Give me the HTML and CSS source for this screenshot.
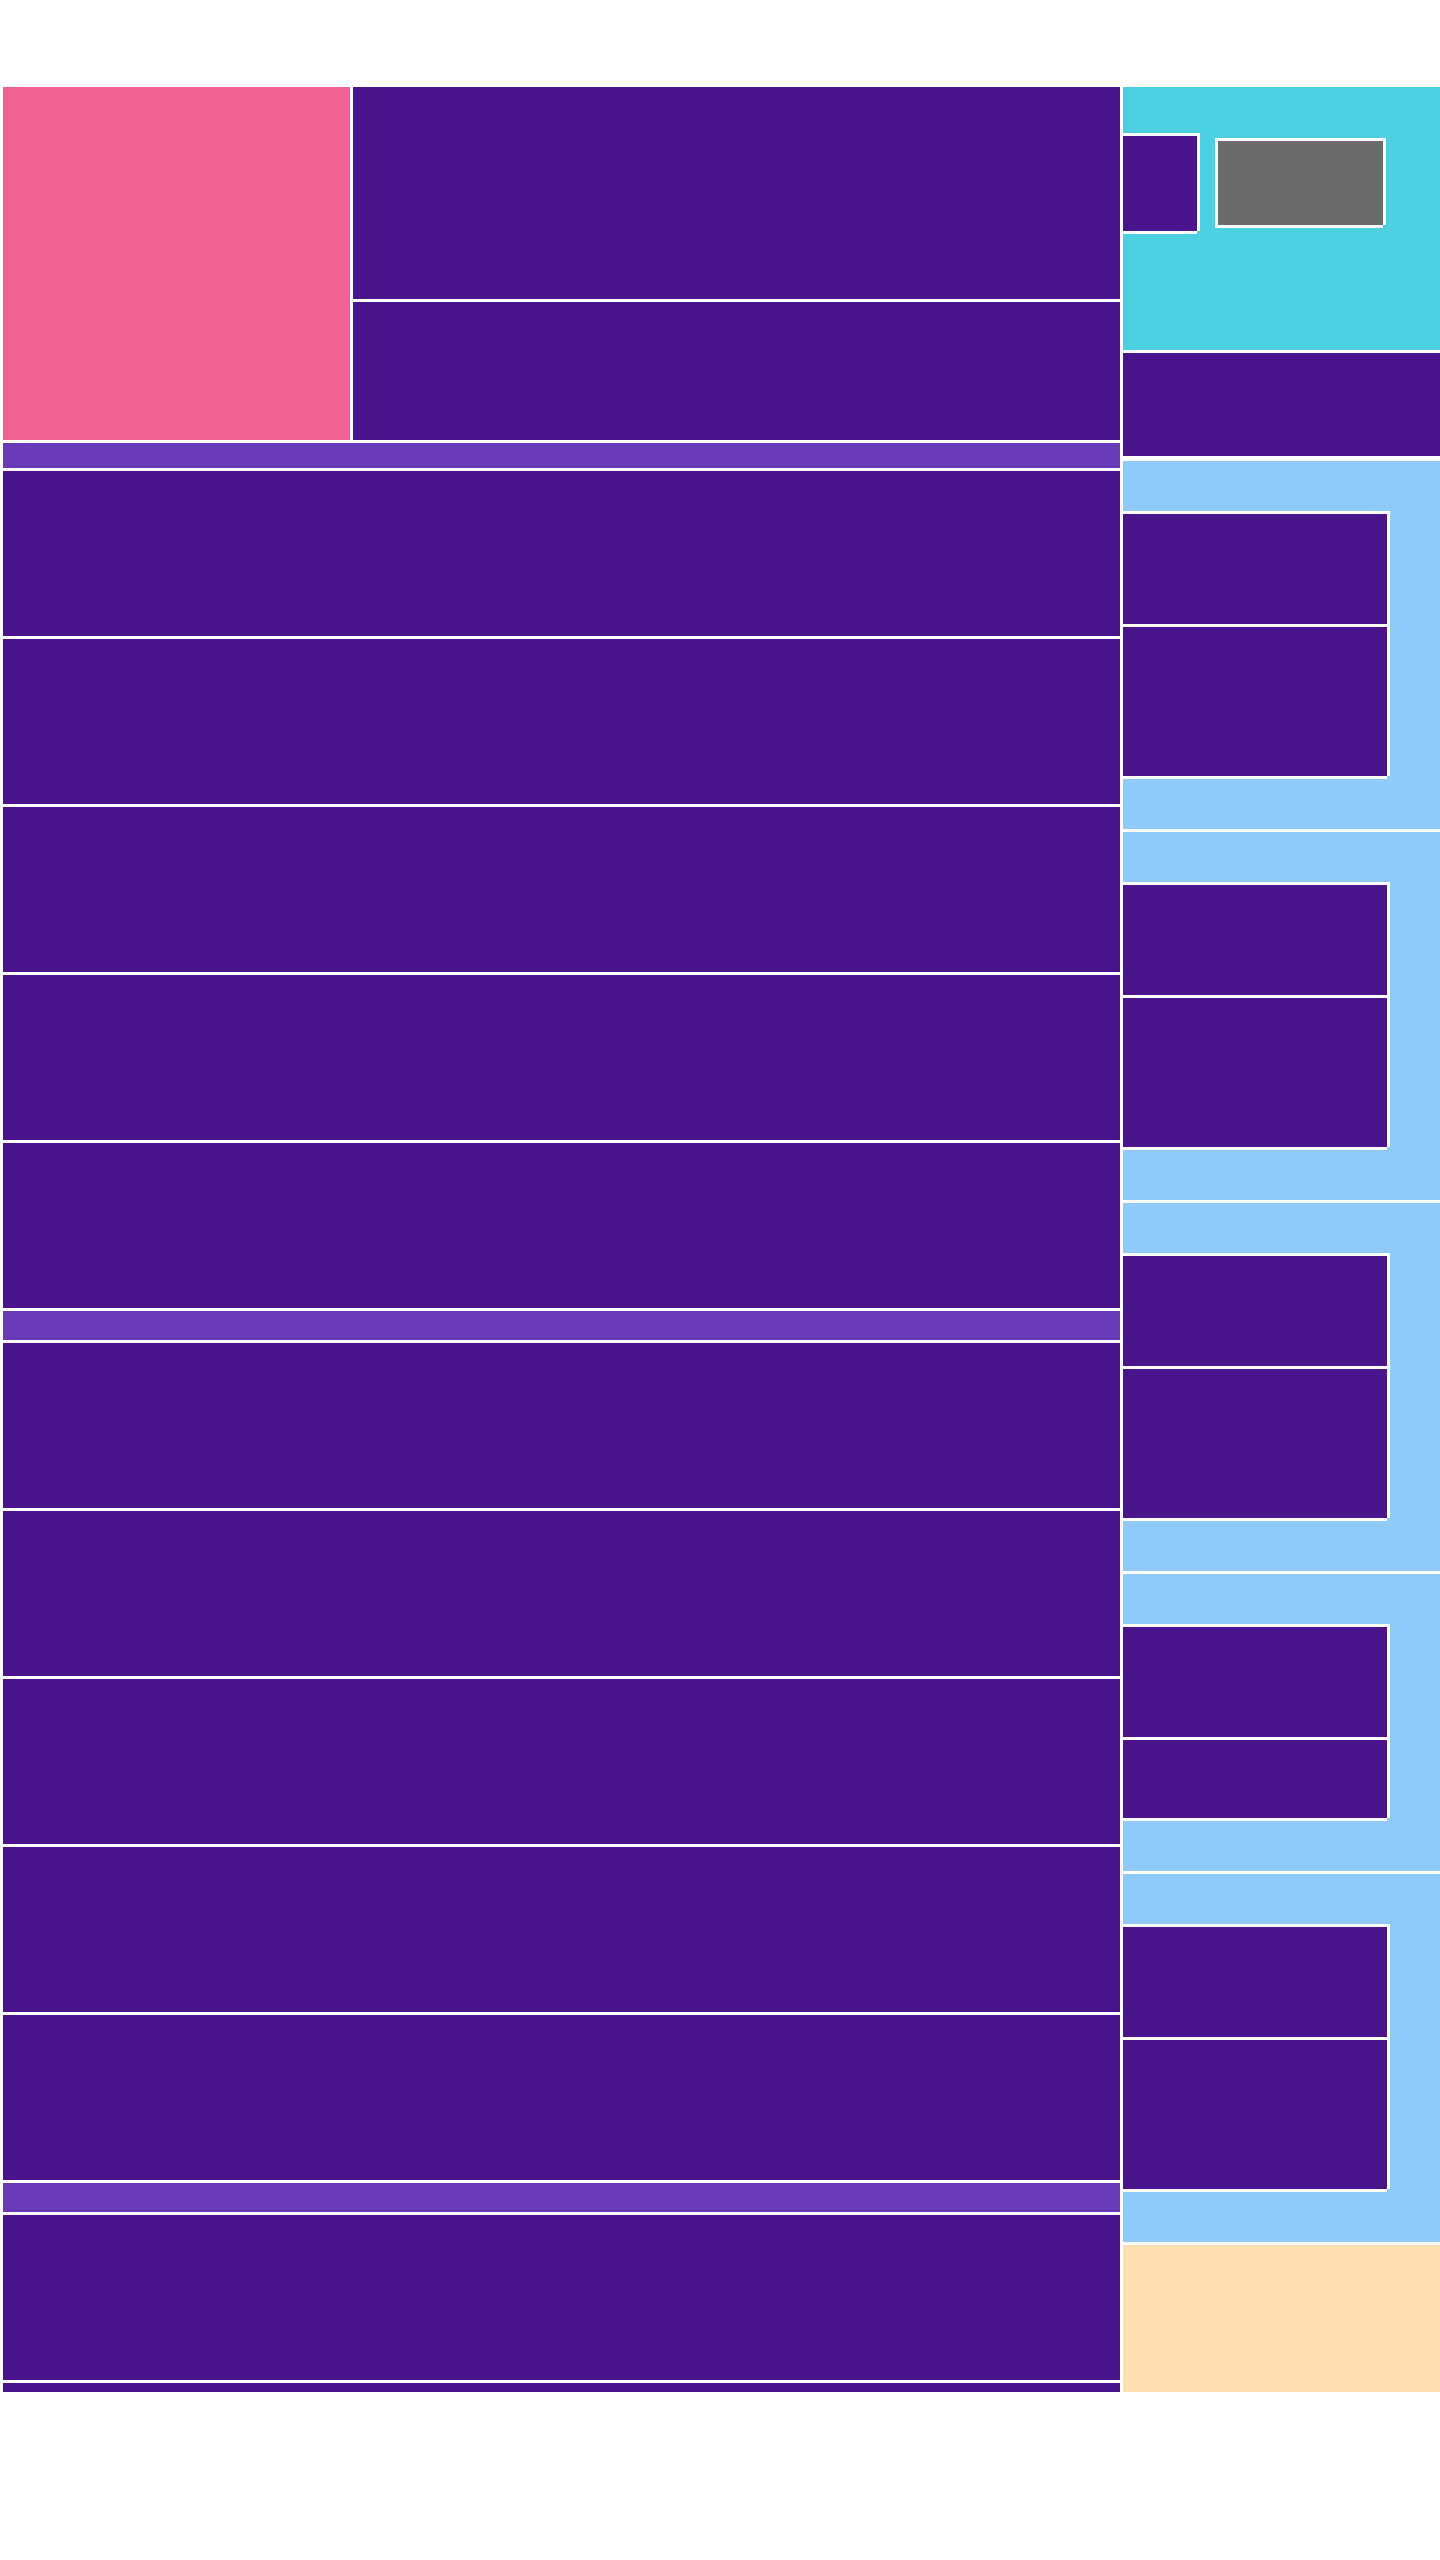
FILE: index.html
```html
<!DOCTYPE html>
<html lang="en">
<head>
<meta charset="utf-8">
<title>Layout</title>
<link rel="stylesheet" href="styles.css">
</head>
<body>
<div class="page">
  <div class="left">
    <div class="top">
      <div class="pink"></div>
      <div class="stack">
        <div class="cell cell-a"></div>
        <div class="cell cell-b"></div>
      </div>
    </div>
    <div class="bar bar-first"></div>
    <div class="row"></div>
    <div class="row"></div>
    <div class="row"></div>
    <div class="row"></div>
    <div class="row"></div>
    <div class="bar"></div>
    <div class="row"></div>
    <div class="row"></div>
    <div class="row"></div>
    <div class="row"></div>
    <div class="row"></div>
    <div class="bar"></div>
    <div class="row"></div>
    <div class="strip"></div>
  </div>
  <div class="right">
    <div class="cyan">
      <div class="framed mini"></div>
      <div class="framed gray"></div>
    </div>
    <div class="side-cell"></div>
    <div class="group">
      <div class="framed box">
        <div class="bcell c1"></div>
        <div class="bcell c2"></div>
      </div>
    </div>
    <div class="group">
      <div class="framed box">
        <div class="bcell c1"></div>
        <div class="bcell c2"></div>
      </div>
    </div>
    <div class="group">
      <div class="framed box">
        <div class="bcell c1"></div>
        <div class="bcell c2"></div>
      </div>
    </div>
    <div class="group group-short">
      <div class="framed box">
        <div class="bcell c1"></div>
        <div class="bcell c2-short"></div>
      </div>
    </div>
    <div class="group">
      <div class="framed box">
        <div class="bcell c1"></div>
        <div class="bcell c2"></div>
      </div>
    </div>
    <div class="peach"></div>
  </div>
</div>
</body>
</html>
```

FILE: styles.css
```css
html, body {
  margin: 0;
  padding: 0;
  background: #ffffff;
}

.page {
  display: flex;
  gap: 3px;
  padding: 87px 0 0 3px;
  width: 1440px;
  box-sizing: border-box;
}

.left {
  width: 1117px;
  display: flex;
  flex-direction: column;
  gap: 3px;
}

.top {
  height: 353px;
  display: flex;
  gap: 3px;
}

.pink {
  width: 347px;
  background: #f06292;
}

.stack {
  flex: 1;
  display: flex;
  flex-direction: column;
  gap: 3px;
}

.cell {
  background: #4a148c;
}

.cell-a { height: 212px; }
.cell-b { height: 138px; }

.bar {
  height: 29px;
  background: #673ab7;
}

.bar-first { height: 25px; }

.row {
  height: 165px;
  background: #4a148c;
}

.strip {
  height: 9px;
  background: #4a148c;
}

.right {
  width: 317px;
  display: flex;
  flex-direction: column;
  gap: 3px;
}

.cyan {
  height: 263px;
  background: #4dd0e1;
  display: flex;
  align-items: flex-start;
  gap: 18px;
}

.framed {
  border-top: 3px solid #ffffff;
  box-shadow: 3px 0 0 #ffffff, 0 3px 0 #ffffff;
}

.mini {
  width: 74px;
  height: 95px;
  margin-top: 46px;
  background: #4a148c;
}

.gray {
  width: 165px;
  height: 84px;
  margin-top: 51px;
  border-left: 3px solid #ffffff;
  background: #6b6b6b;
}

.side-cell {
  height: 103px;
  background: #4a148c;
  margin-bottom: 2px;
}

.group {
  height: 368px;
  box-sizing: border-box;
  padding-top: 50px;
  background: #90caf9;
}

.group-short { height: 297px; }

.box {
  width: 264px;
  display: flex;
  flex-direction: column;
  gap: 3px;
  background: #ffffff;
}

.bcell { background: #4a148c; }
.c1 { height: 110px; }
.c2 { height: 149px; }
.c2-short { height: 78px; }

.peach {
  height: 147px;
  background: #ffe0b2;
}
```
